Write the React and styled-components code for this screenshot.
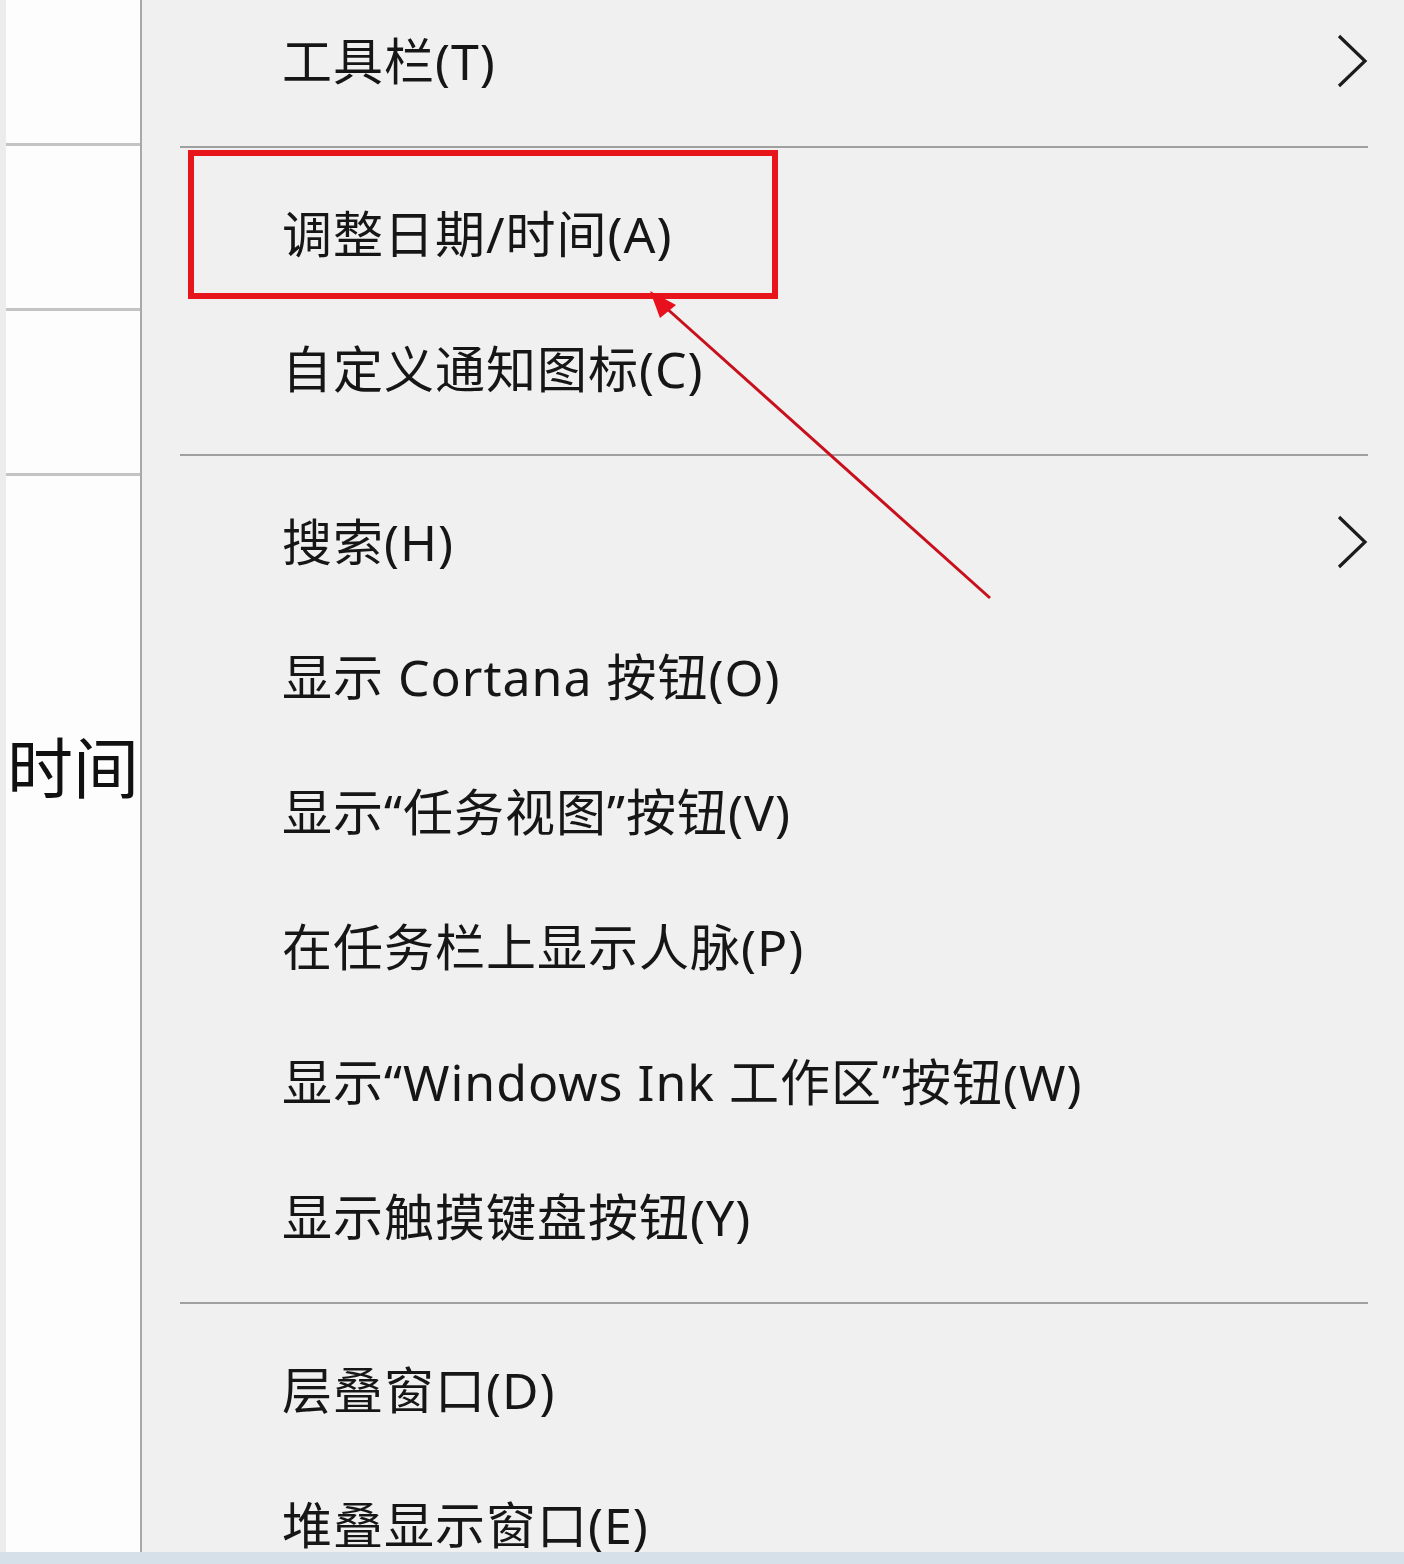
import React from "react";
import styled, { createGlobalStyle } from "styled-components";

const items = [
  { label: "工具栏(T)", sub: true },
  { sep: true },
  { label: "调整日期/时间(A)" },
  { label: "自定义通知图标(C)" },
  { sep: true },
  { label: "搜索(H)", sub: true },
  { label: "显示 Cortana 按钮(O)" },
  { label: "显示“任务视图”按钮(V)" },
  { label: "在任务栏上显示人脉(P)" },
  { label: "显示“Windows Ink 工作区”按钮(W)" },
  { label: "显示触摸键盘按钮(Y)" },
  { sep: true },
  { label: "层叠窗口(D)" },
  { label: "堆叠显示窗口(E)" }
];

const Chevron = () => (
  <svg width="36" height="56" viewBox="0 0 36 56">
    <path d="M5 3 L31 28 L5 53" fill="none" stroke="#1c1c1c" strokeWidth="3.2" />
  </svg>
);

const App = () => {
  return (
    <>
      <GlobalStyle />
      <Page>
        <Screen>
          <SidePane>
            <SideCell $h={143} />
            <SideCell $h={162} />
            <SideCell $h={162} />
            <SideLabel>时间</SideLabel>
          </SidePane>
          <Menu>
            <MenuList>
              {items.map((item, i) =>
                item.sep ? (
                  <Separator key={i} />
                ) : (
                  <Row key={i}>
                    <Label>{item.label}</Label>
                    {item.sub && <Chevron />}
                  </Row>
                )
              )}
            </MenuList>
            <Highlight />
            <Arrow width="1404" height="1564" viewBox="0 0 1404 1564">
              <line x1="990" y1="598" x2="664" y2="306" stroke="#c8101c" strokeWidth="3" />
              <polygon points="650,291 676,305 660,318" fill="#e8101c" />
            </Arrow>
          </Menu>
        </Screen>
        <BottomStrip />
      </Page>
    </>
  );
};

const GlobalStyle = createGlobalStyle`
  html, body {
    margin: 0;
    padding: 0;
    background: #f0f0f0;
  }
  body {
    font-family: "Noto Sans", "Noto Sans CJK SC", sans-serif;
    color: #161616;
  }
`;

const Page = styled.div`
  width: 1404px;
  height: 1564px;
  display: flex;
  flex-direction: column;
  overflow: hidden;
`;

const Screen = styled.div`
  flex: 1;
  display: flex;
  min-height: 0;
`;

const SidePane = styled.div`
  width: 134px;
  border-left: 6px solid #ececec;
  border-right: 2px solid #a8a8a8;
  background: #fdfdfd;
  display: flex;
  flex-direction: column;
`;

const SideCell = styled.div`
  height: ${(p) => p.$h}px;
  border-bottom: 3px solid #c4c4c4;
  flex-shrink: 0;
`;

const SideLabel = styled.div`
  margin-top: 258px;
  margin-left: 1px;
  font-size: 66px;
  line-height: 66px;
  white-space: nowrap;
  color: #111;
`;

const Menu = styled.div`
  position: relative;
  flex: 1;
  background: #f0f0f0;
`;

const MenuList = styled.div`
  margin-top: -7px;
  display: flex;
  flex-direction: column;
`;

const Row = styled.div`
  height: 135px;
  padding-left: 140px;
  padding-right: 34px;
  display: flex;
  align-items: center;
  justify-content: space-between;
`;

const Label = styled.span`
  font-size: 50px;
  letter-spacing: 1px;
  line-height: 1;
  white-space: nowrap;
`;

const Separator = styled.div`
  height: 38px;
  margin: 0 36px 0 38px;
  display: flex;
  align-items: center;
  &::after {
    content: "";
    flex: 1;
    height: 2px;
    background: #a0a0a0;
  }
`;

const Highlight = styled.div`
  position: absolute;
  left: 46px;
  top: 150px;
  width: 578px;
  height: 137px;
  border: 6px solid #e8141b;
  pointer-events: none;
`;

const Arrow = styled.svg`
  position: absolute;
  left: -142px;
  top: 0;
  pointer-events: none;
`;

const BottomStrip = styled.div`
  height: 12px;
  background: #d6e0e8;
  flex-shrink: 0;
`;

export default App;
